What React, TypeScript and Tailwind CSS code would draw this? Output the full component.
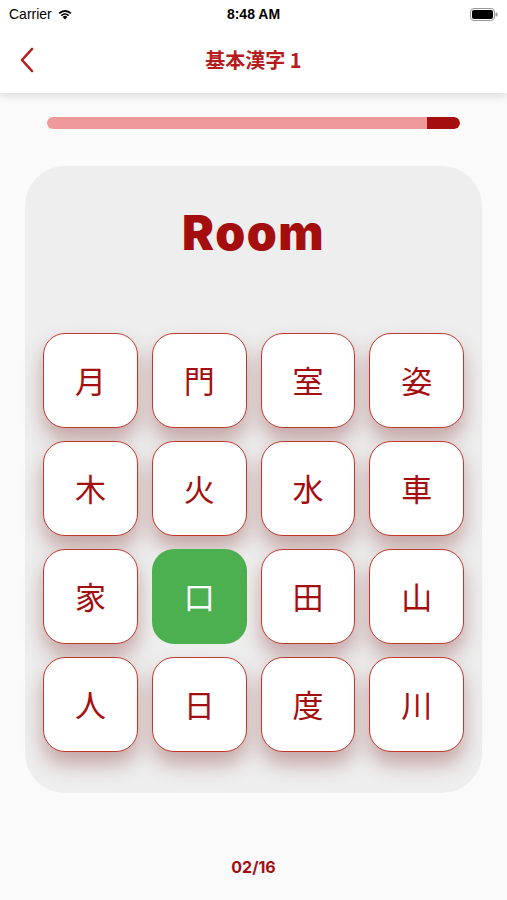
import React from "react";

const kanji = ["月","門","室","姿","木","火","水","車","家","口","田","山","人","日","度","川"];

export default function App() {
  return (
    <div className="w-[507px] h-[900px] bg-[#fafafa] flex flex-col overflow-hidden" style={{ fontFamily: "Inter, 'Noto Sans CJK JP', sans-serif" }}>
      {/* header */}
      <div className="bg-white shadow-[0_3px_8px_rgba(0,0,0,0.12)] relative z-10">
        <div className="h-[28px] flex items-center justify-between px-[9px] text-[14px] text-black" style={{ fontFamily: "'Liberation Sans', sans-serif" }}>
          <div className="flex items-center gap-[5px] w-[120px]">
            <span>Carrier</span>
            <svg width="16" height="12" viewBox="0 0 16 12">
              <path d="M8 11.5 L5.6 8.9 A3.4 3.4 0 0 1 10.4 8.9 Z" fill="#000" />
              <path d="M3.7 6.9 A6.2 6.2 0 0 1 12.3 6.9 L11 8.2 A4.4 4.4 0 0 0 5 8.2 Z" fill="#000" />
              <path d="M1.5 4.7 A9.3 9.3 0 0 1 14.5 4.7 L13.2 6 A7.5 7.5 0 0 0 2.8 6 Z" fill="#000" />
            </svg>
          </div>
          <span className="font-semibold">8:48 AM</span>
          <div className="w-[120px] flex justify-end">
            <svg width="28" height="13" viewBox="0 0 28 13">
              <rect x="0.5" y="0.5" width="24" height="12" rx="3.5" fill="none" stroke="#999" />
              <rect x="2" y="2" width="21" height="9" rx="2" fill="#000" />
              <rect x="25.5" y="4.5" width="2" height="4" rx="1" fill="#999" />
            </svg>
          </div>
        </div>
        <div className="h-[65px] relative flex items-center justify-center">
          <svg className="absolute left-[18px] top-[19px]" width="18" height="26" viewBox="0 0 18 26">
            <path d="M14 2 L4 13 L14 24" fill="none" stroke="#b71c1c" strokeWidth="2.6" strokeLinecap="round" strokeLinejoin="round" />
          </svg>
          <span className="text-[20px] font-bold text-[#b71c1c] pb-[2px]" style={{ fontFamily: "'Noto Sans CJK JP', sans-serif" }}>基本漢字 1</span>
        </div>
      </div>

      {/* progress */}
      <div className="px-[47px] pt-[24px]">
        <div className="h-[12px] rounded-full bg-[#ef9a9a] flex justify-end overflow-hidden">
          <div className="w-[33px] h-full bg-[#a50e0e] rounded-r-full" />
        </div>
      </div>

      {/* card */}
      <div className="mx-[25px] mt-[37px] rounded-[40px] bg-[#eeeeee] px-[18px] pb-[41px] flex flex-col">
        <div className="h-[167px] flex items-start justify-center pt-[43px]">
          <span className="text-[48px] font-black text-[#a50e0e] tracking-[1.5px] leading-none">Room</span>
        </div>
        <div className="grid grid-cols-4 gap-x-[14px] gap-y-[13px]">
          {kanji.map((k, i) => {
            const active = k === "口";
            return (
              <div
                key={i}
                className={
                  active
                    ? "h-[95px] rounded-[22px] bg-[#4caf50] flex items-center justify-center text-white text-[31px]"
                    : "h-[95px] rounded-[22px] bg-white border border-[#c0392b] shadow-[0_12px_20px_rgba(120,30,30,0.35)] flex items-center justify-center text-[#a50e0e] text-[31px]"
                }
                style={{ fontFamily: "'Noto Sans CJK JP', sans-serif" }}
              >
                {k}
              </div>
            );
          })}
        </div>
      </div>

      <div className="flex justify-center pt-[62px]">
        <span className="text-[16px] font-bold text-[#a50e0e]">02/16</span>
      </div>
    </div>
  );
}
